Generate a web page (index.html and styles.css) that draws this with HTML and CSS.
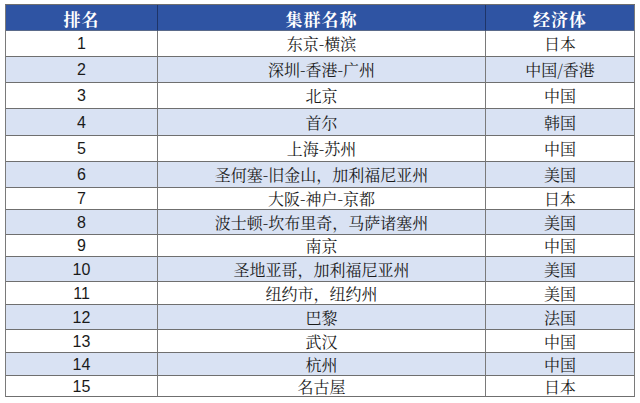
FILE: index.html
```html
<!DOCTYPE html>
<html lang="zh-CN">
<head>
<meta charset="utf-8">
<title>集群排名</title>
<link rel="stylesheet" href="styles.css">
</head>
<body>
<div class="table">
  <div class="row head"><div class="cell">排名</div><div class="cell">集群名称</div><div class="cell">经济体</div></div>
  <div class="row"><div class="cell num">1</div><div class="cell">东京-横滨</div><div class="cell">日本</div></div>
  <div class="row alt"><div class="cell num">2</div><div class="cell">深圳-香港-广州</div><div class="cell">中国/香港</div></div>
  <div class="row"><div class="cell num">3</div><div class="cell">北京</div><div class="cell">中国</div></div>
  <div class="row alt"><div class="cell num">4</div><div class="cell">首尔</div><div class="cell">韩国</div></div>
  <div class="row"><div class="cell num">5</div><div class="cell">上海-苏州</div><div class="cell">中国</div></div>
  <div class="row alt"><div class="cell num">6</div><div class="cell">圣何塞-旧金山，加利福尼亚州</div><div class="cell">美国</div></div>
  <div class="row"><div class="cell num">7</div><div class="cell">大阪-神户-京都</div><div class="cell">日本</div></div>
  <div class="row alt"><div class="cell num">8</div><div class="cell">波士顿-坎布里奇，马萨诸塞州</div><div class="cell">美国</div></div>
  <div class="row"><div class="cell num">9</div><div class="cell">南京</div><div class="cell">中国</div></div>
  <div class="row alt"><div class="cell num">10</div><div class="cell">圣地亚哥，加利福尼亚州</div><div class="cell">美国</div></div>
  <div class="row"><div class="cell num">11</div><div class="cell">纽约市，纽约州</div><div class="cell">美国</div></div>
  <div class="row alt"><div class="cell num">12</div><div class="cell">巴黎</div><div class="cell">法国</div></div>
  <div class="row"><div class="cell num">13</div><div class="cell">武汉</div><div class="cell">中国</div></div>
  <div class="row alt"><div class="cell num">14</div><div class="cell">杭州</div><div class="cell">中国</div></div>
  <div class="row"><div class="cell num">15</div><div class="cell">名古屋</div><div class="cell">日本</div></div>
</div>
</body>
</html>
```
FILE: styles.css
```css
* { box-sizing: border-box; }
html, body { margin: 0; padding: 0; background: #ffffff; }
body {
  width: 640px;
  height: 403px;
  overflow: hidden;
  font-family: "Noto Serif CJK SC", "Noto Sans CJK SC", serif;
  color: #1a1a1a;
}
.table {
  margin: 4px 0 0 5px;
  width: 630px;
  border-top: 1px solid #6f6f6f;
  border-left: 1px solid #7a7a7a;
  display: flex;
  flex-direction: column;
}
.row {
  display: grid;
  grid-template-columns: 152px 328px 149px;
  height: 26px;
  background: #ffffff;
}
.row.alt { background: #d9e2f3; }
.cell {
  border-right: 1px solid #7a7a7a;
  border-bottom: 1px solid #6f6f6f;
  display: flex;
  align-items: center;
  justify-content: center;
  font-size: 16px;
  line-height: 1;
  padding-top: 1px;
}
.num {
  font-family: "Liberation Sans", Arial, sans-serif;
  font-size: 16px;
}
.head {
  background: #2f54a3;
  height: 26px;
}
.head .cell {
  color: #ffffff;
  font-weight: 700;
  font-size: 17px;
  letter-spacing: 1px;
  border-right-color: #1e3468;
  border-bottom-color: #5a6a8a;
}
.head .cell:last-child { border-right-color: #7a7a7a; }
.row:nth-child(2), .row:nth-child(3), .row:nth-child(4),
.row:nth-child(6), .row:nth-child(7) { height: 26px; }
.row:nth-child(5) { height: 27px; }
.row:nth-child(8) { height: 22px; }
.row:nth-child(9) { height: 25px; }
.row:nth-child(10) { height: 22px; }
.row:nth-child(11) { height: 25px; }
.row:nth-child(12) { height: 23px; }
.row:nth-child(13) { height: 25px; }
.row:nth-child(14) { height: 23px; }
.row:nth-child(15) { height: 23px; }
.row:nth-child(16) { height: 21px; }
```
